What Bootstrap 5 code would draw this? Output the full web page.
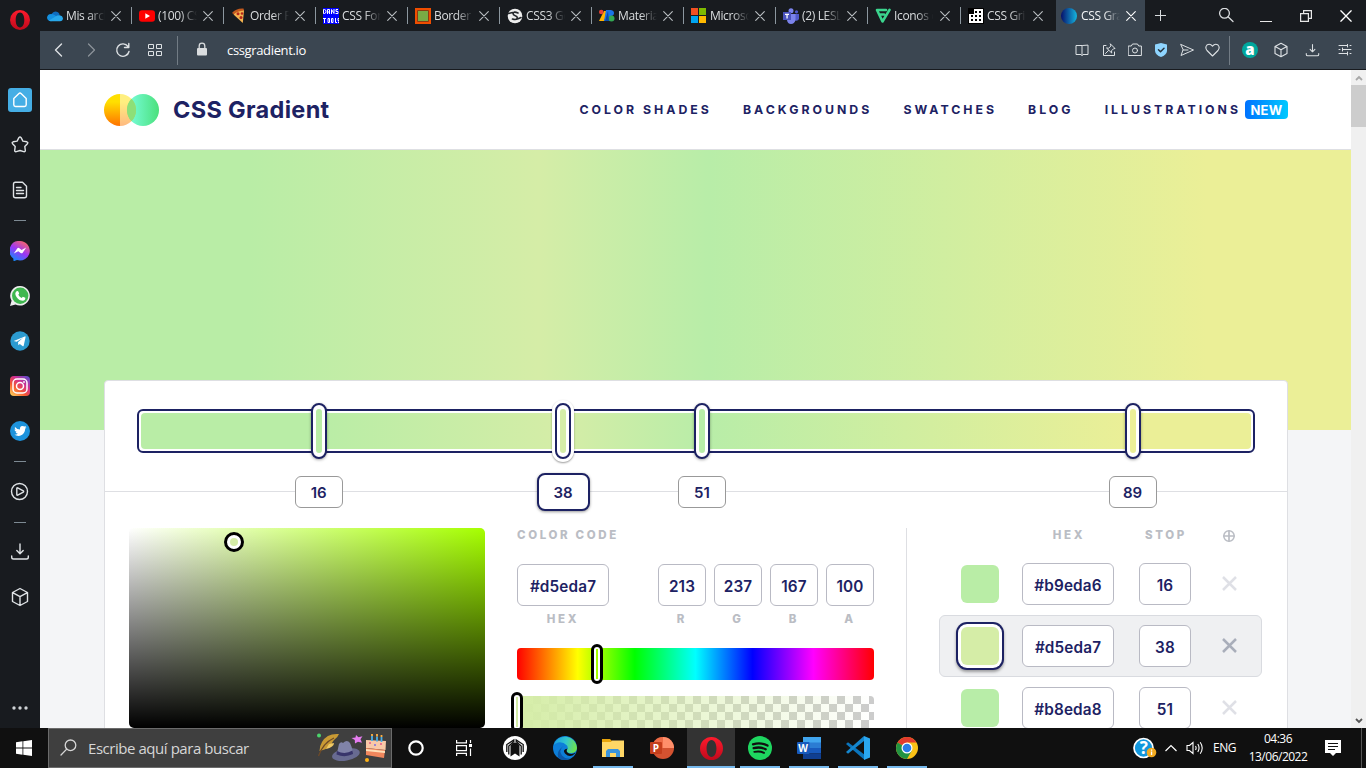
<!DOCTYPE html>
<html lang="es">
<head>
<meta charset="utf-8">
<title>CSS Gradient</title>
<meta name="viewport" content="width=device-width, initial-scale=1">
<link href="https://cdn.jsdelivr.net/npm/bootstrap@5.3.0/dist/css/bootstrap.min.css" rel="stylesheet">
<style>
:root{--navy:#1d2263;--ui:"Open Sans","Noto Sans",sans-serif;--grad:linear-gradient(90deg,#b9eda6 16%,#d5eda7 38%,#b8eda8 51%,#ebef97 89%)}
body{width:1366px;height:768px;overflow:hidden;font-family:Inter,"Liberation Sans",sans-serif;color:var(--navy);background:#181b1f}
svg{display:block;flex:none}
.ln{fill:none;stroke:currentColor;stroke-linecap:round;stroke-linejoin:round}
.workspace{height:728px}
.side{width:40px;background:#181b1f;color:#dfe3e6}
.side .slot{height:45px}
.side .slot.up{padding-bottom:2px}
.side .dash{height:16px}
.side .dash i{width:12px;height:1px;background:#7d8a93}
.side .brand-slot{height:77.5px;padding-top:10px}
.home{width:24px;height:24px;border-radius:3px;background:#45aee5;color:#fff}
.tabs{height:31px;background:#181b1f;font:12px/16px var(--ui);color:#d9dcde}
.tab{width:92px;padding-left:7px;position:relative}
.tab+.tab:not(.on)::before{content:"";position:absolute;left:-1px;top:7px;width:1px;height:17px;background:#8c979f}
.tab svg.fav{width:16px;height:16px}
.tab .tt{width:39px;margin-left:3px;overflow:hidden;white-space:nowrap;letter-spacing:-.35px;-webkit-mask-image:linear-gradient(90deg,#000 58%,transparent 100%);mask-image:linear-gradient(90deg,#000 58%,transparent 100%)}
.tab svg.x{margin-left:6px;color:#b9bec2}
.tab.on{width:89px;padding-left:5px;background:#3b4651;color:#f4f6f7}
.tab.on .tt{margin-left:4px}
.tab.on svg.x{color:#fff}
.win{width:40px}
.bar{height:38px;background:#3b4651;color:#dde1e4}
.bar .b32{width:32px}.bar .b26{width:26.1px}
.bar .sep{width:1px;height:29px;background:#727c85}
.bar .url{font:13px/18px var(--ui);color:#fff;letter-spacing:-.35px}
.bar-line{height:1px;background:#181b1f}
.page{height:658px;background:#f4f5f7;overflow:hidden}
.site{width:1311px}
.head{height:80px;background:#fff;border-bottom:1px solid #dedfe3;padding:0 63px 0 64px}
.logo-text{font-size:23.5px;font-weight:700;letter-spacing:.32px;line-height:30px;margin-left:13px;padding-top:1px}
.menu{font-size:12.3px;font-weight:700;letter-spacing:3px;line-height:18px}
.menu span{margin-right:31.1px;padding-top:1px}
.menu span.last-link{margin-right:4px}
.menu span.new{font-size:13px;letter-spacing:.3px;width:43px;height:19px;line-height:18px;border-radius:4px;margin:0;color:#fff;background:linear-gradient(90deg,#0072ff,#00c9ff)}
.hero{height:280px;background:var(--grad)}
.tool{width:1184px;height:420px;margin:-50px 0 0 64px;background:#fff;border:1px solid #dedfe3;border-radius:4px}
.track-wrap{height:111px;padding:28px 32px 0;border-bottom:1px solid #dedfe3}
.track{height:44px;border:2px solid var(--navy);border-radius:6px;padding:2px;width:1118px}
.track .fill{height:36px;border-radius:4px;background:var(--grad);position:relative}
.knob{position:absolute;top:-10px;width:16px;height:56px;margin-left:-8px;border:2px solid var(--navy);border-radius:8px;background:#fff;padding:4px 3px;box-shadow:0 1px 3px rgba(0,0,0,.35)}
.knob i{display:block;height:44px;border-radius:3px}
.knob.cur{box-shadow:0 0 0 3px #fff,0 1px 2px 3px rgba(0,0,0,.4)}
.pos{position:absolute;top:63px;width:48px;height:32px;margin-left:-24px;border:1px solid #999;border-radius:6px;background:#fff;font-size:15px;font-weight:600;line-height:32px;text-align:center}
.pos.cur{top:60px;width:53px;height:38px;margin-left:-26.3px;line-height:36px;border:2px solid var(--navy);border-radius:8px;box-shadow:0 1px 3px rgba(0,0,0,.4)}
.shade{width:356px;height:200px;border-radius:5px;background:linear-gradient(0deg,#000,transparent),linear-gradient(90deg,#fff,#a6ff00);position:relative}
.dot{position:absolute;left:95px;top:4px;width:20px;height:20px;border-radius:50%;border:3px solid #000;background:#fff;padding:3px}
.dot i{display:block;width:8px;height:8px;border-radius:50%;background:#d5eda7}
.cap{font-size:11.5px;font-weight:800;letter-spacing:2.65px;color:#babdc4;line-height:14px}
.cap.under{padding-top:6px}
.box{height:42px;border:1px solid #b9bac4;border-radius:6px;background:#fff;font-size:15.3px;font-weight:600;letter-spacing:.15px;line-height:43px;text-align:center}
.w92{width:92px}.w48{width:48px}.w52{width:52px}
.codes{width:357px;margin-left:32px}
.hue{height:32px;border-radius:4px;background:linear-gradient(90deg,red,#ff0 17%,#0f0 33%,#0ff 50%,#00f 66%,#f0f 83%,red);position:relative}
.alpha{height:32px;border-radius:4px;background:linear-gradient(90deg,#d5eda7,rgba(213,237,167,0)),repeating-conic-gradient(#fff 0 25%,#ccc 0 50%) 0 0/16px 16px;position:relative}
.grip{position:absolute;top:-4px;width:12px;height:40px;margin-left:-6px;border:3px solid #000;border-radius:6px;background:#fff;padding:2px}
.grip i{display:block;height:30px;width:2px}
.stops{margin-left:32px;border-left:1px solid #dedfe3;padding-left:32px;width:356px;height:300px}
.stop-row{height:62px;width:323px;border:1px solid transparent;border-radius:6px;padding-left:21px;color:#dfe0e6}
.stop-row .box{color:var(--navy)}
.stop-row svg{margin:0 0 2px 31px}
.stop-row.cur{background:#eff0f2;border-color:#d9dbe0;color:#a9aeba}
.sw{width:38px;height:38px;border-radius:6px}
.cur .sw{box-shadow:0 0 0 3px #fff,0 0 0 5px var(--navy),0 2px 3px 5px rgba(0,0,0,.35)}
.scroll{width:15px;background:#f0f0f0}
.scroll .end{height:15px}
.thumb{height:42px;background:#cdcdcd}
.task{height:40px;background:#101010;color:#fff;font-family:var(--ui)}
.start{width:48px}
.find{width:344px;height:40px;border:1px solid #6b6b6b;background:#3f3f3f;font-size:15px;color:#d6d6d6;letter-spacing:-.45px}
.app{width:49px;height:40px;position:relative}
.app.open::after{content:"";position:absolute;left:5px;bottom:0;width:40px;height:2px;background:#76b9ed}
.app.here{width:48px;margin-left:1px;background:#333}
.app.here::after{left:0;width:48px}
.tray{font-size:12px;line-height:18px;letter-spacing:-.5px}
</style>
</head>
<body class="d-flex flex-column m-0">
<svg width="0" height="0" class="position-absolute">
  <defs>
    <linearGradient id="gOpera" x1="0" y1="0" x2="0" y2="1"><stop offset="0" stop-color="#ff1b2d"/><stop offset="1" stop-color="#c00a1c"/></linearGradient>
    <linearGradient id="gYel" x1="0" y1="0" x2="0" y2="1"><stop offset=".25" stop-color="#ffdf00"/><stop offset="1" stop-color="#ff7300"/></linearGradient>
    <linearGradient id="gGrn"><stop offset="0" stop-color="#7bffe0"/><stop offset="1" stop-color="#4be07c"/></linearGradient>
    <linearGradient id="gBlue"><stop offset="0" stop-color="#06106b"/><stop offset="1" stop-color="#15b6e0"/></linearGradient>
    <linearGradient id="gMsg" x1=".2" y1="1" x2=".8" y2="0"><stop offset="0" stop-color="#0a90ff"/><stop offset=".5" stop-color="#9b36f5"/><stop offset="1" stop-color="#ff6a60"/></linearGradient>
    <linearGradient id="gIg" x1=".1" y1="1" x2=".9" y2="0"><stop offset="0" stop-color="#ffd05a"/><stop offset=".35" stop-color="#f7592f"/><stop offset=".65" stop-color="#cf2e92"/><stop offset="1" stop-color="#5b4fcf"/></linearGradient>
    <linearGradient id="gEdge" x1="0" y1=".3" x2="1" y2=".5"><stop offset="0" stop-color="#1b9fe0"/><stop offset=".5" stop-color="#32c6cf"/><stop offset="1" stop-color="#6fe34b"/></linearGradient>
    <symbol id="x" viewBox="0 0 10 10"><path class="ln" stroke-width="1.1" d="M.7.7l8.6 8.6M9.3.7L.7 9.3"/></symbol>
    <symbol id="cube" viewBox="0 0 20 20"><path class="ln" stroke-width="1.4" d="M10 1.5l7.5 4v9L10 18.500l-7.500-4v-9zM2.700 5.700L10 9.600l7.300-3.900M10 9.600v8.700"/></symbol>
    <symbol id="down" viewBox="0 0 20 20"><path class="ln" stroke-width="1.4" d="M10 2v9.500M6.800 8.500L10 11.700l3.200-3.200M1.700 14v1.200q0 1.800 1.800 1.800h13q1.800 0 1.800-1.800V14"/></symbol>
    <symbol id="opera" viewBox="0 0 20 20"><path fill="url(#gOpera)" fill-rule="evenodd" d="M10 0a10 10 0 100 20 10 10 0 000-20zM10 2.600c2.700 0 4.300 3.300 4.300 7.400s-1.600 7.400-4.300 7.400S5.700 14.100 5.700 10 7.300 2.600 10 2.600z"/></symbol>
  </defs>
</svg>

<div class="workspace d-flex">
  <!-- browser sidebar -->
  <aside class="side d-flex flex-column align-items-center">
    <div class="brand-slot"><svg width="20" height="20"><use href="#opera"/></svg></div>
    <div class="slot d-flex align-items-center"><div class="home d-flex align-items-center justify-content-center"><svg width="16" height="16" viewBox="0 0 16 16"><path class="ln" stroke-width="1.400" d="M1.800 6.400L6.700 1.700q1.300-1.200 2.600 0l4.900 4.700v6.400q0 1.700-1.700 1.700h-9q-1.700 0-1.700-1.700z"/></svg></div></div>
    <div class="slot d-flex align-items-center"><svg width="20" height="20" viewBox="0 0 20 20"><path class="ln" stroke-width="1.400" d="M8.900 2.700q1.100-1.500 2.200 0l1.800 3.400 3.900.7q1.700.5.6 1.900l-2.600 2.800.5 3.900q0 1.700-1.600 1.200l-3.700-1.100-3.700 1.100q-1.600.5-1.600-1.200l.5-3.900-2.600-2.800Q1.500 7.300 3.200 6.800l3.900-.7z"/></svg></div>
    <div class="slot d-flex align-items-center"><svg width="20" height="20" viewBox="0 0 20 20"><path class="ln" stroke-width="1.400" d="M5 2.300h7.500l4 4V15.700q0 2-2 2H5.500q-2 0-2-2V4.300q0-2 2-2zM6.500 7.500h4.500M6.500 10.500h7M6.500 13.500h7"/></svg></div>
    <div class="dash d-flex align-items-center"><i></i></div>
    <div class="slot d-flex align-items-center"><svg width="20" height="20" viewBox="0 0 20 20"><path fill="url(#gMsg)" d="M10 0a10 9.700 0 11-3 19l-2.700 1q-.8.200-.8-.6l-.2-2A9.700 9.700 0 0110 0z"/><path fill="#fff" d="M3.800 12.600l3.400-5q1-1.300 2.200-.3l2.200 1.600 4.600-2.400-3.300 5q-1 1.400-2.300.5L8.300 10.300z"/></svg></div>
    <div class="slot d-flex align-items-center"><svg width="20" height="20" viewBox="0 0 20 20"><path fill="#eee" d="M10.200 0a9.800 9.800 0 11-4.700 18.500L0 20l1.600-5.200A9.800 9.800 0 0110.200 0z"/><circle cx="10.200" cy="9.800" r="8.200" fill="#3fb74f"/><path fill="#fff" d="M6.500 5.200q1.500-.9 2.100.9l.5 1.300q.1.500-.8 1.400 1.200 2.300 3.400 3.100l1.100-1.200 2.500 1.100q.3 2.700-2.500 3-3.500-.1-6.300-3.900Q4.100 7.300 6.500 5.200z"/></svg></div>
    <div class="slot d-flex align-items-center"><svg width="20" height="20" viewBox="0 0 20 20"><circle cx="10" cy="10" r="9.700" fill="#2c9bd0"/><path fill="#fff" d="M3.700 9.900l11.100-4.500q1-.2.700 1l-1.800 8.300q-.4.900-1.200.3l-2.700-2-1.400 1.300-.4-3 5.100-4.500-6.400 4z"/></svg></div>
    <div class="slot d-flex align-items-center"><svg width="20" height="20" viewBox="0 0 20 20"><rect width="20" height="20" rx="4" fill="url(#gIg)"/><g fill="none" stroke="#fff" stroke-width="1.500"><rect x="3" y="3" width="14" height="14" rx="4"/><circle cx="10" cy="10" r="3.500"/></g><circle cx="14" cy="6" r=".9" fill="#fff"/></svg></div>
    <div class="slot d-flex align-items-center"><svg width="20" height="20" viewBox="0 0 20 20"><circle cx="10" cy="10" r="10" fill="#1d93dc"/><path fill="#fff" d="M5 6q2.200 2.500 5 2.500-.5-3.300 2.400-3.600 1.300 0 2 .7l1.700-.6-1 1.600 1.400-.3-1.300 1.500q-.2 5.500-5.200 7-3 .6-5.600-1 2 .1 3.500-1.100-1.800-.3-2.300-1.800h1.100Q4.500 10.300 4.400 8.400l1.200.3Q4.200 7.300 5 6z"/></svg></div>
    <div class="dash d-flex align-items-center"><i></i></div>
    <div class="slot d-flex align-items-center"><svg width="20" height="20" viewBox="0 0 20 20"><circle class="ln" cx="9.500" cy="9.500" r="8" stroke-width="1.400"/><path class="ln" stroke-width="1.400" d="M6.800 6.500q0-.9.900-.6l5.600 3q.8.600 0 1.200l-5.600 3q-.9.300-.9-.6z"/></svg></div>
    <div class="dash d-flex align-items-center"><i></i></div>
    <div class="slot up d-flex align-items-center"><svg width="20" height="20"><use href="#down"/></svg></div>
    <div class="slot up d-flex align-items-center"><svg width="20" height="20"><use href="#cube"/></svg></div>
    <div class="mt-auto pb-2"><svg width="20" height="24" viewBox="0 0 20 24" fill="#cfd3d6"><circle cx="4" cy="12" r="1.700"/><circle cx="10" cy="12" r="1.700"/><circle cx="16" cy="12" r="1.700"/></svg></div>
  </aside>

  <div class="flex-grow-1 d-flex flex-column">
    <!-- tab strip -->
    <div class="tabs d-flex">
      <div class="tab d-flex align-items-center"><svg class="fav" viewBox="0 0 16 16"><path fill="#0f6cbd" d="M4.500 6Q7 2 11 4.200q1.500 1 1.700 3L7 10z"/><path fill="#1490df" d="M0 9.800Q.3 6.200 4 6q2 0 3.500 1.100L12 10l-8 3.300Q.5 13 0 9.800z"/><path fill="#28a8ea" d="M2 12.600l6.500-4Q10.400 7 12.700 7.200q3 .6 3.300 3-.2 3-3 3.100H4q-1.200 0-2-.7z"/></svg><span class="tt">Mis archivos</span><svg class="x" width="10" height="10"><use href="#x"/></svg></div>
      <div class="tab d-flex align-items-center"><svg class="fav" viewBox="0 0 16 16"><rect y="2.300" width="16" height="11.400" rx="3" fill="#f00"/><path fill="#fff" d="M6.300 5.300v5.400L11 8z"/></svg><span class="tt">(100) CSS</span><svg class="x" width="10" height="10"><use href="#x"/></svg></div>
      <div class="tab d-flex align-items-center"><svg class="fav" viewBox="0 0 16 16"><path fill="#c45a1d" d="M1 5q4-5 11.500-4.500l.6 2.500L4 7z"/><path fill="#f5b450" d="M2.500 6.500Q6 3 13 2.500L11.800 15z"/><circle cx="7" cy="5.700" r="1.500" fill="#b5271b"/><circle cx="11" cy="5.500" r="1.300" fill="#b5271b"/><circle cx="10" cy="9.500" r="1.500" fill="#b5271b"/></svg><span class="tt">Order Food</span><svg class="x" width="10" height="10"><use href="#x"/></svg></div>
      <div class="tab d-flex align-items-center"><svg class="fav" viewBox="0 0 16 16"><path fill="#00f" d="M0 0h16v16H0z"/><g fill="none" stroke="#fff"><path d="M.5 1.500v4h1q1.500 0 1.500-2t-1.500-2zM4.500 6V1.500h2V6M4.500 4h2M8.500 6V1.500l2.500 4V1M15 1.500h-2v2h2v2h-2.500M1.500 10v5M0 10.500h3M5 10.500h1.500v4H5zM8.500 10.500H10v4H8.500zM12.500 10v4.500H14M16 10.500h-1v2h1v2h-1"/></g></svg><span class="tt">CSS Font</span><svg class="x" width="10" height="10"><use href="#x"/></svg></div>
      <div class="tab d-flex align-items-center"><svg class="fav" viewBox="0 0 16 16"><path fill="#f04e00" d="M0 0h16v16H0z"/><path fill="#79ab45" stroke="#8c3b12" d="M2.500 2.500h11v11h-11z"/></svg><span class="tt">Border Radius</span><svg class="x" width="10" height="10"><use href="#x"/></svg></div>
      <div class="tab d-flex align-items-center"><svg class="fav" viewBox="0 0 16 16"><circle cx="8" cy="8" r="7.300" fill="#eee"/><path class="ln" style="stroke:#23262a" stroke-width="1.600" d="M1.500 5.500l4-1M11 5Q6.500 3 6 5.600q0 1.600 2.200 2.100 2.500.7 2 2.700-.9 1.900-4.700.7M10.500 11l3.500-1.500"/></svg><span class="tt">CSS3 Gen</span><svg class="x" width="10" height="10"><use href="#x"/></svg></div>
      <div class="tab d-flex align-items-center"><svg class="fav" viewBox="0 0 16 16"><path fill="#ffb300" d="M5 3h4L5 13H0z"/><path fill="#1a73e8" d="M7 2h4v11H5z"/><path fill="#1a73e8" d="M10 2h2q3 .5 3 3t-3 3h-2z"/><circle cx="2.300" cy="4" r="2.300" fill="#ea4335"/><circle cx="12.500" cy="10.500" r="3" fill="#34a853"/><path fill="#0c4ba8" d="M9 3l1 10H6z"/></svg><span class="tt">Material D</span><svg class="x" width="10" height="10"><use href="#x"/></svg></div>
      <div class="tab d-flex align-items-center"><svg class="fav" viewBox="0 0 16 16"><path fill="#f25022" d="M0 0h7v7H0z"/><path fill="#7fba00" d="M8 0h7v7H8z"/><path fill="#00a4ef" d="M0 8h7v7H0z"/><path fill="#ffb900" d="M8 8h7v7H8z"/></svg><span class="tt">Microsoft</span><svg class="x" width="10" height="10"><use href="#x"/></svg></div>
      <div class="tab d-flex align-items-center"><svg class="fav" viewBox="0 0 16 16"><circle cx="8" cy="2.700" r="2.500" fill="#7b83eb"/><circle cx="13.500" cy="3.800" r="1.600" fill="#5059c9"/><path fill="#5059c9" d="M11 6h5v5q-1 2.500-4 1.500z"/><path fill="#7b83eb" d="M4 6h8.500v6q-1 4-4.500 4t-4-4z"/><path fill="#4b53bc" d="M0 4h8v8H0z"/><path fill="#fff" d="M2 5.700h4V7H4.700v3.500H3.400V7H2z"/></svg><span class="tt">(2) LESLY</span><svg class="x" width="10" height="10"><use href="#x"/></svg></div>
      <div class="tab d-flex align-items-center" style="width:93px"><svg class="fav" viewBox="0 0 16 16"><path class="ln" style="stroke:#3bd58e" stroke-width="2.600" d="M11 2H2l5.500 11.500L14.500 1.800M4.500 6.500H9"/></svg><span class="tt">Iconos de</span><svg class="x" style="margin-left:7px" width="10" height="10"><use href="#x"/></svg></div>
      <div class="tab d-flex align-items-center" style="width:95px"><svg class="fav" viewBox="0 0 16 16"><path d="M0 0h16v16H0z"/><path fill="#fff" d="M6 1h9v14H1V6h5z"/><path d="M7 3h2v2H7zM11 3h2v2h-2zM3 7h2v2H3zM7 7h2v2H7zM11 7h2v2h-2zM3 11h2v2H3zM7 11h2v2H7zM11 11h2v2h-2z"/></svg><span class="tt">CSS Grid G</span><svg class="x" style="margin-left:7px" width="10" height="10"><use href="#x"/></svg></div>
      <div class="tab on d-flex align-items-center"><svg class="fav" viewBox="0 0 16 16"><circle cx="8" cy="8" r="8" fill="url(#gBlue)"/></svg><span class="tt">CSS Gradient</span><svg class="x" width="10" height="10"><use href="#x"/></svg></div>
      <div class="d-flex align-items-center" style="padding-left:10px"><svg width="11" height="11" viewBox="0 0 11 11"><path class="ln" d="M5.500 0v11M0 5.500h11"/></svg></div>
      <div class="d-flex ms-auto">
        <div class="win d-flex align-items-center justify-content-center"><svg width="16" height="16" viewBox="0 0 16 16"><path class="ln" stroke-width="1.300" d="M10.300 9L15 13.500"/><circle class="ln" cx="6.500" cy="5.300" r="4.900" stroke-width="1.300"/></svg></div>
        <div class="win d-flex align-items-center justify-content-center pt-2"><svg width="12" height="6" viewBox="0 0 12 6"><path fill="#e8e8e8" d="M0 4h12v1H0z"/></svg></div>
        <div class="win d-flex align-items-center justify-content-center"><svg width="12" height="12" viewBox="0 0 12 12"><path fill="none" stroke="#e8e8e8" stroke-width="1.200" d="M.6 3.600h7.800v7.800H.6zM3.600 3.600v-3h7.800v7.800h-3"/></svg></div>
        <div class="win d-flex align-items-center justify-content-center text-white"><svg width="12" height="12"><use href="#x"/></svg></div>
      </div>
    </div>
    <!-- address bar -->
    <div class="bar d-flex align-items-center">
      <div class="b32 d-flex justify-content-center" style="margin-left:3px"><svg width="14" height="14" viewBox="0 0 14 14"><path class="ln" stroke-width="1.400" d="M9.500 1L3.500 7l6 6"/></svg></div>
      <div class="b32 d-flex justify-content-center opacity-50"><svg width="14" height="14" viewBox="0 0 14 14"><path class="ln" stroke-width="1.200" d="M4.500 1l6 6-6 6"/></svg></div>
      <div class="b32 d-flex justify-content-center"><svg width="16" height="16" viewBox="0 0 16 16"><path class="ln" stroke-width="1.400" d="M13 4.500A6.200 6.200 0 1014 9.500M13.800 1.500v4H9.500"/></svg></div>
      <div class="b32 d-flex justify-content-center"><svg width="14" height="12" viewBox="0 0 14 12"><path fill="none" stroke="currentColor" d="M.5.500h5v4h-5zM8.500.500h5v4h-5zM.5 7.500h5v4h-5zM8.500 7.500h5v4h-5z"/></svg></div>
      <div class="sep" style="margin-left:6px"></div>
      <svg class="ms-3" width="16" height="16" viewBox="0 0 16 16"><rect x="3" y="6" width="10" height="7.500" rx="1" fill="#dadddf"/><path fill="none" stroke="#dadddf" stroke-width="1.300" d="M5.200 6.500V4a2.800 2.800 0 015.600 0v2.500"/></svg>
      <span class="url" style="margin-left:17px">cssgradient.io</span>
      <div class="ms-auto d-flex align-items-center" style="padding-right:5px">
        <div class="b26 d-flex justify-content-center"><svg width="14" height="14" viewBox="0 0 14 14"><path class="ln" d="M7 2.500H1v9h5L7 12.500 8 11.500h5v-9zM7 2.500v10"/></svg></div>
        <div class="b26 d-flex justify-content-center"><svg width="14" height="14" viewBox="0 0 14 14"><path class="ln" d="M4 2.500H1.500v10h11V9M8.500 1l4.500 4.500-1.500.3-2 2 .2 2.200L4.500 5l2.200.2 2-2zM6.500 7.500L3.500 10.500"/></svg></div>
        <div class="b26 d-flex justify-content-center"><svg width="14" height="14" viewBox="0 0 14 14"><path class="ln" d="M.6 3h2.700l1.200-2h5l1.200 2h2.700v9.500H.6z"/><circle class="ln" cx="7" cy="7.500" r="2.500"/></svg></div>
        <div class="b26 d-flex justify-content-center"><svg width="14" height="14" viewBox="0 0 14 14"><path fill="#8fd5ff" d="M7 0l6 1.600V8q-.5 4-6 6-5.500-2-6-6V1.600z"/><path class="ln" style="stroke:#27323c" stroke-width="1.500" d="M4.500 6.800l2 2 3.500-3.500"/></svg></div>
        <div class="b26 d-flex justify-content-center"><svg width="14" height="14" viewBox="0 0 14 14"><path class="ln" d="M1 1.500l12.500 5.500L1 12.500l2-5.500zM3 7h5"/></svg></div>
        <div class="b26 d-flex justify-content-center"><svg width="15" height="14" viewBox="0 0 15 14"><path class="ln" stroke-width="1.100" d="M7.500 13L2 7.500Q-.3 4.500 2 2q3-2 5.500 1.200Q10 0 13 2q2.300 2.500 0 5.500z"/></svg></div>
        <div class="sep me-1" style="margin-left:3px"></div>
        <div class="d-flex justify-content-center" style="width:32px"><svg width="16" height="16" viewBox="0 0 16 16"><circle cx="8" cy="8" r="8" fill="#00a79d"/><text x="8" y="12.500" text-anchor="middle" font-family="Open Sans" font-size="15" font-weight="800" fill="#fff">a</text></svg></div>
        <div class="d-flex justify-content-center" style="width:30px"><svg width="16" height="16"><use href="#cube"/></svg></div>
        <div class="d-flex justify-content-center" style="width:33px"><svg width="15" height="15"><use href="#down"/></svg></div>
        <div class="d-flex justify-content-center" style="width:32px"><svg width="14" height="12" viewBox="0 0 14 12"><path class="ln" d="M1 1.500h8M12 1.500h1M1 5.500h1M5 5.500h8M1 9.500h8M12 9.500h1M9.500 0v3M4.500 4v3M9.500 8v3"/></svg></div>
      </div>
    </div>
    <div class="bar-line"></div>

    <div class="page d-flex">
      <main class="site">
        <header class="head d-flex align-items-center">
          <svg width="56" height="32" viewBox="0 0 56 32"><circle cx="39" cy="16" r="16" fill="url(#gGrn)"/><path fill="url(#gYel)" d="M16 0a16 16 0 000 32z"/><path fill="url(#gYel)" opacity=".5" d="M16 0a16 16 0 010 32z"/><path fill="#8ddf78" d="M27.500 4.800a16 16 0 010 22.400 16 16 0 010-22.400z"/></svg>
          <div class="logo-text">CSS Gradient</div>
          <nav class="menu d-flex align-items-center ms-auto">
            <span>COLOR SHADES</span>
            <span>BACKGROUNDS</span>
            <span>SWATCHES</span>
            <span>BLOG</span>
            <span class="last-link">ILLUSTRATIONS</span>
            <span class="new text-center">NEW</span>
          </nav>
        </header>
        <div class="hero"></div>
        <section class="tool position-relative">
          <div class="track-wrap">
            <div class="track"><div class="fill">
              <div class="knob" style="left:16%"><i style="background:#b9eda6"></i></div>
              <div class="knob cur" style="left:38%"><i style="background:#d5eda7"></i></div>
              <div class="knob" style="left:50.54%"><i style="background:#b8eda8"></i></div>
              <div class="knob" style="left:89.33%"><i style="background:#ebef97"></i></div>
              <div class="pos" style="left:16%">16</div>
              <div class="pos cur" style="left:38%">38</div>
              <div class="pos" style="left:50.54%">51</div>
              <div class="pos" style="left:89.33%">89</div>
            </div></div>
          </div>
          <div class="d-flex" style="padding:36px 24px 0">
            <div class="shade"><div class="dot"><i></i></div></div>
            <div class="codes">
              <div class="cap">COLOR CODE</div>
              <div class="d-flex gap-2" style="margin-top:22px">
                <div class="me-auto text-center"><div class="box w92">#d5eda7</div><div class="cap under">HEX</div></div>
                <div class="text-center"><div class="box w48">213</div><div class="cap under">R</div></div>
                <div class="text-center"><div class="box w48">237</div><div class="cap under">G</div></div>
                <div class="text-center"><div class="box w48">167</div><div class="cap under">B</div></div>
                <div class="text-center"><div class="box w48">100</div><div class="cap under">A</div></div>
              </div>
              <div class="hue" style="margin-top:22px"><div class="grip" style="left:22.4%"><i style="background:#a6ff00"></i></div></div>
              <div class="alpha mt-3"><div class="grip" style="left:0%"><i style="background:#d5eda7"></i></div></div>
            </div>
            <div class="stops">
              <div class="d-flex cap" style="height:25px">
                <span class="text-center" style="width:92px;margin-left:84px">HEX</span>
                <span class="text-center" style="width:52px;margin-left:25px">STOP</span>
                <svg style="margin:2px 0 0 31px" width="12" height="12" viewBox="0 0 12 12"><circle class="ln" cx="6" cy="6" r="5.200" stroke-width="1.500"/><path class="ln" stroke-width="1.700" d="M6 1v10M1 6h10"/></svg>
              </div>
              <div class="stop-row d-flex align-items-center"><div class="sw" style="background:#b9eda6"></div><div class="box w92" style="margin-left:23px">#b9eda6</div><div class="box w52" style="margin-left:25px">16</div><svg width="15" height="15" viewBox="0 0 15 15"><path fill="none" stroke="currentColor" stroke-width="2.500" d="M1 1l13 13M14 1L1 14"/></svg></div>
              <div class="stop-row cur d-flex align-items-center"><div class="sw" style="background:#d5eda7"></div><div class="box w92" style="margin-left:23px">#d5eda7</div><div class="box w52" style="margin-left:25px">38</div><svg width="15" height="15" viewBox="0 0 15 15"><path fill="none" stroke="currentColor" stroke-width="2.500" d="M1 1l13 13M14 1L1 14"/></svg></div>
              <div class="stop-row d-flex align-items-center"><div class="sw" style="background:#b8eda8"></div><div class="box w92" style="margin-left:23px">#b8eda8</div><div class="box w52" style="margin-left:25px">51</div><svg width="15" height="15" viewBox="0 0 15 15"><path fill="none" stroke="currentColor" stroke-width="2.500" d="M1 1l13 13M14 1L1 14"/></svg></div>
            </div>
          </div>
        </section>
      </main>
      <div class="scroll d-flex flex-column">
        <div class="end d-flex align-items-center justify-content-center"><svg width="8" height="6" viewBox="0 0 8 6"><path fill="none" stroke="#a8a8a8" stroke-width="1.800" d="M1 5l3-3 3 3"/></svg></div>
        <div class="thumb"></div>
        <div class="end mt-auto d-flex align-items-center justify-content-center"><svg width="8" height="6" viewBox="0 0 8 6"><path fill="none" stroke="#555" stroke-width="1.800" d="M1 1l3 3 3-3"/></svg></div>
      </div>
    </div>
  </div>
</div>

<!-- taskbar -->
<footer class="task d-flex">
  <div class="start d-flex align-items-center justify-content-center"><svg width="16" height="16" viewBox="0 0 16 16" fill="#fff"><path d="M0 2.200l6.500-.9v6.200H0zM7.300 1.200L16 0v7.500H7.300zM0 8.400h6.500v6.300L0 13.800zM7.300 8.400H16V16l-8.700-1.200z"/></svg></div>
  <div class="find d-flex align-items-center">
    <svg class="ms-2" width="20" height="20" viewBox="0 0 20 20"><circle class="ln" cx="13.500" cy="7.300" r="5.300" stroke-width="1.300"/><path class="ln" stroke-width="1.300" d="M9.700 11.100L4 17"/></svg>
    <span style="margin-left:11px">Escribe aquí para buscar</span>
    <svg class="ms-auto" width="76" height="34" viewBox="0 0 76 34">
      <circle cx="4" cy="4.500" r="2" fill="#4bd56c"/>
      <path fill="#c99a34" d="M24 3Q12 2 7 11q-2.500 4-2.500 9Q14 18 17 13q-1 0 2-4 4-3 5-6z"/><path fill="#f0c964" d="M11 18q8-2 8-6l-5 1z"/><path fill="none" stroke="#6e4a28" stroke-width="1.200" d="M19 7Q8 12 3.500 25"/>
      <ellipse cx="31" cy="23.500" rx="14" ry="6" transform="rotate(-10 31 24)" fill="#686b91"/><path fill="#8083a8" d="M22 22l2-9q2-3 4-1 4-4 7 0 2 4 3 9-8 5-16 1z"/><path fill="#38356b" d="M22 20q8 4 15.500-.5l.5 3.500q-8 4-16.500.5z"/>
      <path fill="#e57df0" d="M41 4l2.500 2.200 4-1-2 3 1.500 3.500-4-1-3 1.800-.2-3.500-3.300-2 4-.5z"/>
      <path fill="#f9c9a7" d="M51 9l20 1-.5 9L51 17z"/><path fill="#f1875d" d="M51 17l19 2-1 8-18-3z"/><path fill="#ffe0b8" d="M51 18l19 2v2l-19-2z"/><path stroke="#4aaee8" stroke-width="1.800" d="M57 5v5M62 5.500v5M66.500 6v5"/><path stroke="#ffae42" stroke-width="1.800" d="M57 3v2M62 3v2.500M66.500 4v2"/><circle cx="55" cy="12" r="1" fill="#e35b88"/><circle cx="60" cy="14" r="1" fill="#7b6fe0"/><circle cx="66" cy="13" r="1" fill="#e35b88"/>
      <circle cx="52" cy="29" r="2" fill="#ffb316"/>
    </svg>
  </div>
  <div class="app d-flex align-items-center justify-content-center" style="width:48px"><svg width="16" height="16" viewBox="0 0 16 16"><circle cx="8" cy="8" r="6.700" fill="none" stroke="#fff" stroke-width="2.200"/></svg></div>
  <div class="app d-flex align-items-center justify-content-center" style="width:47px"><svg width="16" height="16" viewBox="0 0 16 16"><path fill="none" stroke="#fff" stroke-width="1.200" d="M.6 0v2.800h9.800V0M.6 5.600h9.800v5H.6zM.6 16v-2.600h9.800V16M14.500 0v3M14.500 8.500V16"/><path fill="#fff" d="M13 4h3v3h-3z"/></svg></div>
  <div class="app d-flex align-items-center justify-content-center" style="width:55px"><svg width="24" height="24" viewBox="0 0 24 24"><circle cx="12" cy="12" r="12" fill="#fff"/><path fill="#111" d="M7.500 20.500V9.500L10 6.500h4l2.500 3v11L12 17.500z"/><path fill="none" stroke="#111" stroke-width="1.300" d="M3.800 16V8.500L10.800 4v2M5.800 18.500V10l4.500-4M20.200 16V8.500L13.200 4v2M18.200 18.500V10l-4.500-4"/></svg></div>
  <div class="app d-flex align-items-center justify-content-center" style="width:46px"><svg width="24" height="24" viewBox="0 0 24 24"><circle cx="12" cy="12" r="12" fill="#0d7ed8"/><path fill="url(#gEdge)" d="M.6 9A12 12 0 0124 12q-.5 5-6 5-5 0-4-3 1.500-2 0-4.500Q10 5.500 5 6.500 2 7.500.6 9z"/><path fill="#101010" d="M14.500 12.500q-2 2.500.5 4.500 4 2 7.500-.5l-.5 1q-5 5-10 0-3-4 2.500-5z"/><path fill="#0b58a8" d="M10.500 10Q5 14 9 19.500q4 4.500 9 2.500-6 4-12 .5Q2 16 10.500 10z"/></svg></div>
  <div class="app open d-flex align-items-center justify-content-center"><svg width="22" height="18" viewBox="0 0 22 18"><path fill="#e8a50c" d="M0 0h8l2 2v3H0z"/><path fill="#ffd766" d="M0 3h9l1-1.500h12V18H0z"/><path fill="#3a94dd" d="M4 18v-6l2-2h10l2 2v6h-4v-4H8v4z"/></svg></div>
  <div class="app d-flex align-items-center justify-content-center"><svg width="24" height="22" viewBox="0 0 24 22"><circle cx="13" cy="11" r="11" fill="#d35230"/><path fill="#ff8f6b" d="M13 0a11 11 0 0111 11H13z"/><path fill="#ed6c47" d="M13 0v11H2A11 11 0 0113 0z"/><rect y="5" width="12" height="12" rx="1" fill="#c43e1c"/><text x="6" y="15" text-anchor="middle" font-family="Open Sans" font-size="10" font-weight="700" fill="#fff">P</text></svg></div>
  <div class="app open here d-flex align-items-center justify-content-center"><svg width="23" height="23"><use href="#opera"/></svg></div>
  <div class="app open d-flex align-items-center justify-content-center"><svg width="24" height="24" viewBox="0 0 24 24"><circle cx="12" cy="12" r="12" fill="#1ed760"/><path class="ln" style="stroke:#101010" stroke-width="2.300" d="M5 8.300q8-2.200 14.500 1.300M5.700 12.200q6.500-1.800 12 1.100"/><path class="ln" style="stroke:#101010" stroke-width="1.900" d="M6.300 15.900q5.500-1.300 9.700 1"/></svg></div>
  <div class="app open d-flex align-items-center justify-content-center"><svg width="24" height="22" viewBox="0 0 24 22"><path fill="#41a5ee" d="M6 0h18v6H6z"/><path fill="#2b7cd3" d="M6 5.500h18V11H6z"/><path fill="#185abd" d="M6 11h18v5.500H6z"/><path fill="#103f91" d="M6 16.500h18V22H6z"/><rect y="5" width="12.500" height="12" rx="1" fill="#185abd"/><text x="6.200" y="15" text-anchor="middle" font-family="Open Sans" font-size="10" font-weight="700" fill="#fff">W</text></svg></div>
  <div class="app open d-flex align-items-center justify-content-center"><svg width="24" height="24" viewBox="0 0 24 24"><path fill="#0b75bd" d="M0 8l2-1.700L19 19v4.500L17.500 23z"/><path fill="#1587cf" d="M0 16l2 1.800L18 5V0z"/><path fill="#2aa7f0" d="M18 0l6 2.500v19L18 24z"/></svg></div>
  <div class="app open d-flex align-items-center justify-content-center"><svg width="22" height="22" viewBox="0 0 22 22"><circle cx="11" cy="11" r="11" fill="#fbc116"/><path fill="#e33b2e" d="M11 11L1.500 5.500A11 11 0 0120.500 5.500H11z"/><path fill="#229342" d="M1.500 5.500A11 11 0 0011 22l4.700-8.200L11 11z"/><circle cx="11" cy="11" r="5.500" fill="#fff"/><circle cx="11" cy="11" r="4.300" fill="#2b7de9"/></svg></div>
  <div class="tray d-flex align-items-center ms-auto">
    <svg width="24" height="22" viewBox="0 0 24 22"><circle cx="10.500" cy="11" r="9.500" fill="#1297dd" stroke="#fff" stroke-width="1.700"/><text x="10.500" y="17" text-anchor="middle" font-family="Open Sans" font-size="17" font-weight="700" fill="#fff">?</text><circle cx="18.500" cy="15.500" r="4.800" fill="#f3ab21"/><path fill="#fff" d="M17.900 12.500h1.300v1.300h-1.300zM17.900 14.500h1.300V18h-1.300z"/></svg>
    <svg style="margin-left:8px" width="12" height="8" viewBox="0 0 12 8"><path fill="none" stroke="#fff" stroke-width="1.200" d="M.5 7L6 1.500 11.500 7"/></svg>
    <svg style="margin-left:9px" width="18" height="14" viewBox="0 0 18 14"><path fill="none" stroke="#fff" stroke-width="1.100" d="M1 4.500h2.500L7 1.500v11l-3.500-3H1zM9.500 5q1.200 2 0 4M11.800 3q2.500 4 0 8M14.200 1.200q4 5.800 0 11.600"/></svg>
    <span style="margin-left:9px">ENG</span>
    <div class="text-center" style="width:60px;margin-left:12px">04:36<br>13/06/2022</div>
    <svg style="margin-left:17px" width="16" height="16" viewBox="0 0 16 16"><path fill="#fff" d="M0 0h16v13h-5l-3 3-3-3H0z"/><path stroke="#101010" d="M3 3.500h10M3 6.500h10M3 9.500h7"/></svg>
    <div style="width:1px;height:40px;background:#555;margin:0 4px 0 20px"></div>
  </div>
</footer>
<script src="https://cdn.jsdelivr.net/npm/bootstrap@5.3.0/dist/js/bootstrap.bundle.min.js"></script>
</body>
</html>
